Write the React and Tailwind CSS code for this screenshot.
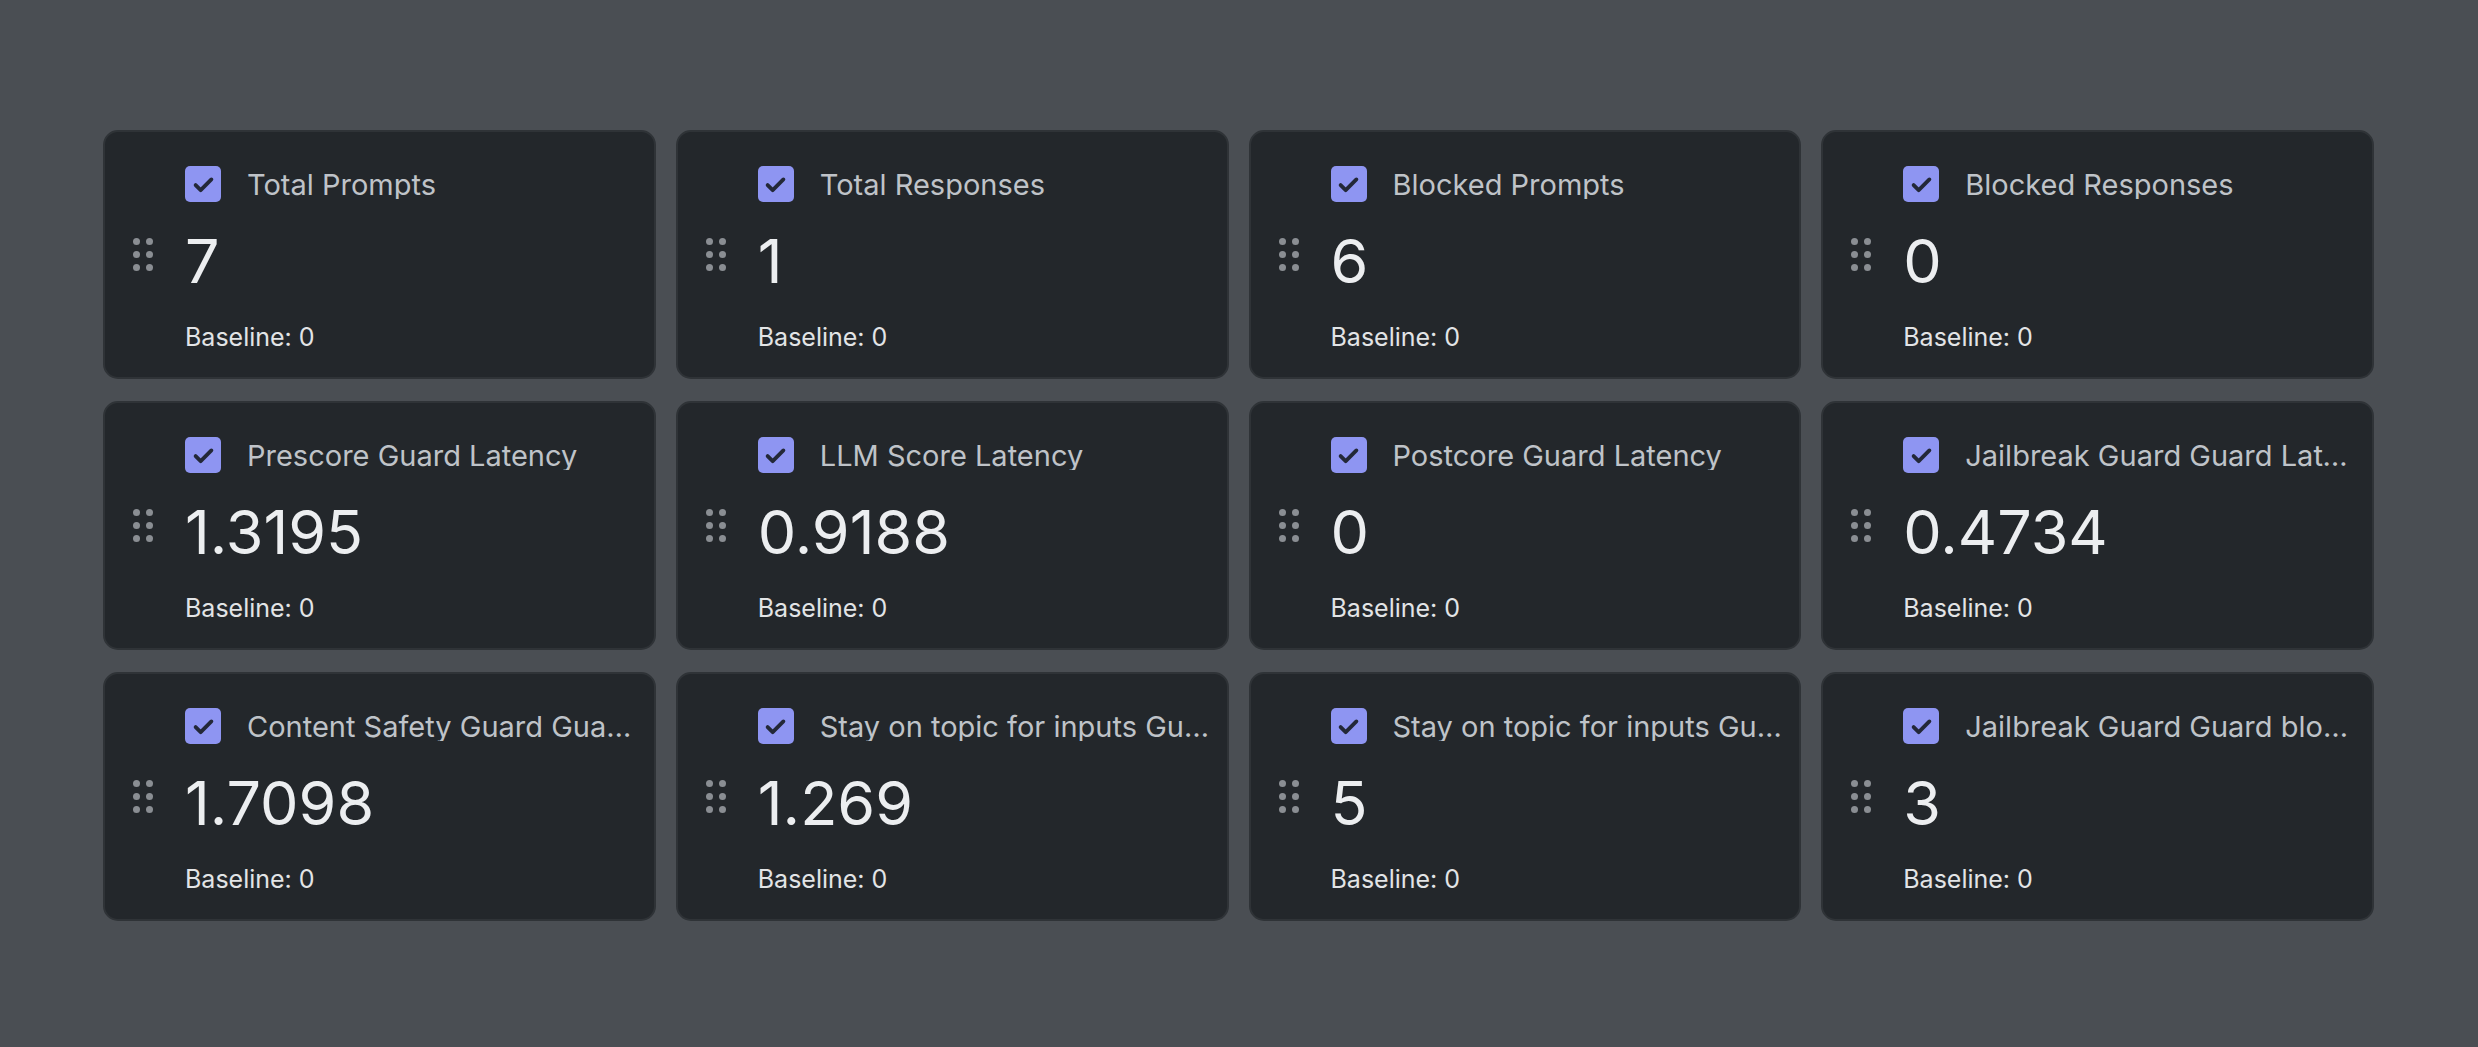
import React from "react";

const metrics = [
  { title: "Total Prompts", value: "7" },
  { title: "Total Responses", value: "1" },
  { title: "Blocked Prompts", value: "6" },
  { title: "Blocked Responses", value: "0" },
  { title: "Prescore Guard Latency", value: "1.3195" },
  { title: "LLM Score Latency", value: "0.9188" },
  { title: "Postcore Guard Latency", value: "0" },
  { title: "Jailbreak Guard Guard Latency", value: "0.4734" },
  { title: "Content Safety Guard Guard Latency", value: "1.7098" },
  { title: "Stay on topic for inputs Guard Latency", value: "1.269" },
  { title: "Stay on topic for inputs Guard blocked", value: "5" },
  { title: "Jailbreak Guard Guard blocked", value: "3" },
];

function DragHandle() {
  return (
    <div className="grid grid-cols-2 gap-x-[6px] gap-y-[6px] shrink-0">
      {[0, 1, 2, 3, 4, 5].map((i) => (
        <span key={i} className="block w-[7px] h-[7px] rounded-full bg-[#8a8e93]" />
      ))}
    </div>
  );
}

function Checkbox() {
  return (
    <div className="w-[36px] h-[36px] rounded-[5px] bg-[#8e95f2] flex items-center justify-center shrink-0">
      <svg width="27" height="27" viewBox="0 0 24 24" fill="none">
        <path d="M5 12.5l4.5 4.5L19 7.5" stroke="#232838" strokeWidth="3.4" strokeLinecap="round" strokeLinejoin="round" />
      </svg>
    </div>
  );
}

function MetricCard({ title, value }) {
  return (
    <div className="h-[249px] bg-[#23272b] border-2 border-[#2f3337] rounded-[15px] flex items-center pl-[28px] pr-[12px] min-w-0">
      <DragHandle />
      <div className="flex flex-col ml-[32px] min-w-0 flex-1 self-start pt-[34px]">
        <div className="flex items-center gap-[26px] min-w-0">
          <Checkbox />
          <p className="text-[29px] text-[#bfc3c8] truncate leading-none">{title}</p>
        </div>
        <p className="text-[61px] leading-none text-[#eceef0] mt-[29px]">{value}</p>
        <p className="text-[25px] leading-[1.5] text-[#e2e4e6] mt-[27px]">Baseline: 0</p>
      </div>
    </div>
  );
}

export default function App() {
  return (
    <div className="min-h-screen bg-[#4a4e53] pt-[130px] pl-[103px] pr-[104px] pb-[120px]" style={{ fontFamily: "Inter, 'Noto Sans', sans-serif" }}>
      <div className="grid grid-cols-4 gap-x-[20px] gap-y-[22px]">
        {metrics.map((m, i) => (
          <MetricCard key={i} title={m.title} value={m.value} />
        ))}
      </div>
    </div>
  );
}
